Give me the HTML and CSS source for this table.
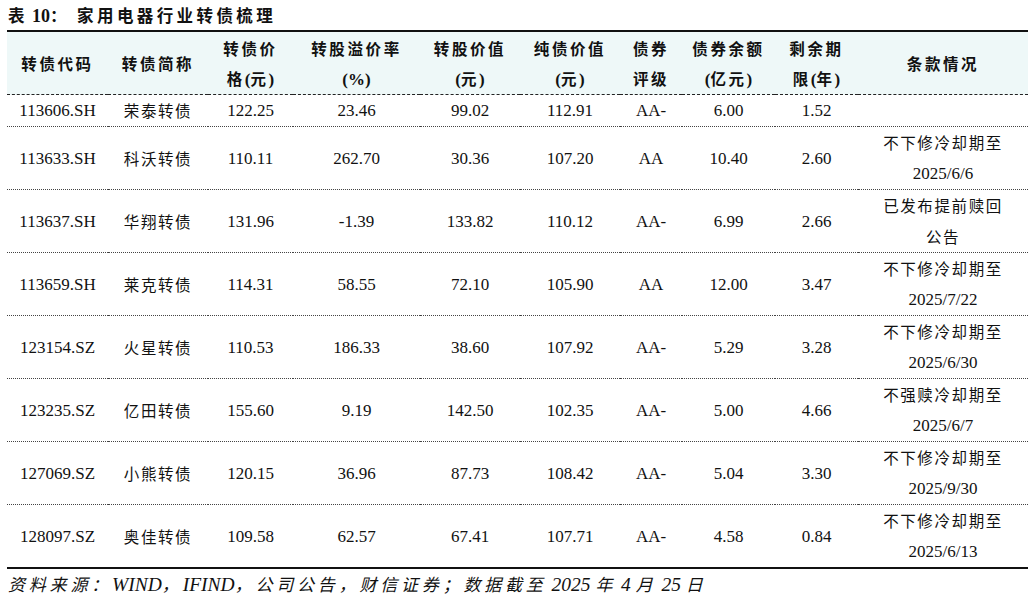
FILE: index.html
```html
<!DOCTYPE html>
<html lang="zh-CN">
<head>
<meta charset="utf-8">
<title>家用电器行业转债梳理</title>
<link rel="stylesheet" href="styles.css">
</head>
<body>
<div class="page">
  <h1 class="title"><span class="cn">表</span> <span class="num">10</span><span class="cn">： 家用电器行业转债梳理</span></h1>
  <table class="bonds">
    <colgroup>
      <col class="c1"><col class="c2"><col class="c3"><col class="c4"><col class="c5">
      <col class="c6"><col class="c7"><col class="c8"><col class="c9"><col class="c10">
    </colgroup>
    <thead>
      <tr>
        <th>转债代码</th>
        <th>转债简称</th>
        <th><div class="ln">转债价</div><div class="ln">格<span class="lat">(</span>元<span class="lat">)</span></div></th>
        <th><div class="ln">转股溢价率</div><div class="ln"><span class="lat">(%)</span></div></th>
        <th><div class="ln">转股价值</div><div class="ln"><span class="lat">(</span>元<span class="lat">)</span></div></th>
        <th><div class="ln">纯债价值</div><div class="ln"><span class="lat">(</span>元<span class="lat">)</span></div></th>
        <th><div class="ln">债券</div><div class="ln">评级</div></th>
        <th><div class="ln">债券余额</div><div class="ln"><span class="lat">(</span>亿元<span class="lat">)</span></div></th>
        <th><div class="ln">剩余期</div><div class="ln">限<span class="lat">(</span>年<span class="lat">)</span></div></th>
        <th>条款情况</th>
      </tr>
    </thead>
    <tbody>
      <tr><td>113606.SH</td><td class="cn">荣泰转债</td><td>122.25</td><td>23.46</td><td>99.02</td><td>112.91</td><td>AA-</td><td>6.00</td><td>1.52</td><td></td></tr>
      <tr><td>113633.SH</td><td class="cn">科沃转债</td><td>110.11</td><td>262.70</td><td>30.36</td><td>107.20</td><td>AA</td><td>10.40</td><td>2.60</td><td class="clause"><div class="ln cn">不下修冷却期至</div><div class="ln">2025/6/6</div></td></tr>
      <tr><td>113637.SH</td><td class="cn">华翔转债</td><td>131.96</td><td>-1.39</td><td>133.82</td><td>110.12</td><td>AA-</td><td>6.99</td><td>2.66</td><td class="clause"><div class="ln cn">已发布提前赎回</div><div class="ln cn">公告</div></td></tr>
      <tr><td>113659.SH</td><td class="cn">莱克转债</td><td>114.31</td><td>58.55</td><td>72.10</td><td>105.90</td><td>AA</td><td>12.00</td><td>3.47</td><td class="clause"><div class="ln cn">不下修冷却期至</div><div class="ln">2025/7/22</div></td></tr>
      <tr><td>123154.SZ</td><td class="cn">火星转债</td><td>110.53</td><td>186.33</td><td>38.60</td><td>107.92</td><td>AA-</td><td>5.29</td><td>3.28</td><td class="clause"><div class="ln cn">不下修冷却期至</div><div class="ln">2025/6/30</div></td></tr>
      <tr><td>123235.SZ</td><td class="cn">亿田转债</td><td>155.60</td><td>9.19</td><td>142.50</td><td>102.35</td><td>AA-</td><td>5.00</td><td>4.66</td><td class="clause"><div class="ln cn">不强赎冷却期至</div><div class="ln">2025/6/7</div></td></tr>
      <tr><td>127069.SZ</td><td class="cn">小熊转债</td><td>120.15</td><td>36.96</td><td>87.73</td><td>108.42</td><td>AA-</td><td>5.04</td><td>3.30</td><td class="clause"><div class="ln cn">不下修冷却期至</div><div class="ln">2025/9/30</div></td></tr>
      <tr><td>128097.SZ</td><td class="cn">奥佳转债</td><td>109.58</td><td>62.57</td><td>67.41</td><td>107.71</td><td>AA-</td><td>4.58</td><td>0.84</td><td class="clause"><div class="ln cn">不下修冷却期至</div><div class="ln">2025/6/13</div></td></tr>
    </tbody>
  </table>
  <p class="source"><span class="cn">资料来源：</span>WIND<span class="cn">，</span>IFIND<span class="cn">，公司公告，财信证券；数据截至</span> 2025 <span class="cn">年</span> 4 <span class="cn">月</span> 25 <span class="cn">日</span></p>
</div>
</body>
</html>
```

FILE: styles.css
```css
html, body {
  margin: 0;
  padding: 0;
  background: #ffffff;
  color: #111111;
}

.page {
  width: 1033px;
  height: 600px;
  padding: 0 5px 0 7px;
  box-sizing: border-box;
  overflow: hidden;
  font-family: "Liberation Serif", "Noto Sans CJK SC", serif;
}

.cn {
  font-family: "Noto Sans CJK SC", sans-serif;
  letter-spacing: 1.3px;
}

.lat {
  font-family: "Liberation Serif", serif;
}

.title {
  margin: 0;
  padding-left: 1px;
  height: 30px;
  line-height: 30px;
  font-size: 16.5px;
  font-weight: 700;
  color: #111;
  white-space: nowrap;
  overflow: hidden;
}

.title .cn {
  letter-spacing: 3.4px;
}

.title .num {
  font-family: "Liberation Serif", serif;
  font-size: 18px;
  font-weight: 700;
}

.bonds {
  width: 1021px;
  border-collapse: collapse;
  table-layout: fixed;
  border-top: 2px solid #111;
  border-bottom: 2px solid #111;
}

.c1 { width: 101px; }
.c2 { width: 100px; }
.c3 { width: 85px; }
.c4 { width: 127px; }
.c5 { width: 100px; }
.c6 { width: 100px; }
.c7 { width: 62px; }
.c8 { width: 93px; }
.c9 { width: 83px; }
.c10 { width: 170px; }

.ln {
  height: 31px;
  line-height: 31px;
  overflow: hidden;
  white-space: nowrap;
}

.bonds th {
  background: #eef8f8;
  font-family: "Noto Sans CJK SC", sans-serif;
  font-weight: 700;
  font-size: 15.5px;
  letter-spacing: 2.6px;
  line-height: 30px;
  height: 62px;
  padding: 0;
  text-align: center;
  vertical-align: middle;
  border-bottom: 1.5px dashed #222;
  color: #111;
}

.bonds th .ln {
  height: 30px;
  line-height: 30px;
}

.bonds th .lat {
  font-size: 17px;
  font-weight: 700;
  letter-spacing: 0;
}

.bonds td {
  font-size: 17px;
  line-height: 31px;
  padding: 0;
  height: 31px;
  text-align: center;
  vertical-align: middle;
  border-bottom: 1px dotted #444;
  white-space: nowrap;
  overflow: hidden;
  color: #111;
}

.bonds td.cn {
  font-size: 15.5px;
  letter-spacing: 1.6px;
}

.bonds td.clause {
  height: 62px;
}

.bonds td.clause .cn {
  font-size: 15.5px;
  letter-spacing: 1.6px;
}

.bonds tbody tr:last-child td {
  border-bottom: none;
}

.source {
  margin: 0;
  padding-left: 1px;
  height: 30px;
  line-height: 30px;
  font-size: 19.5px;
  font-style: italic;
  white-space: nowrap;
  color: #111;
}

.source .cn {
  font-size: 17px;
  letter-spacing: 3.8px;
}
```
